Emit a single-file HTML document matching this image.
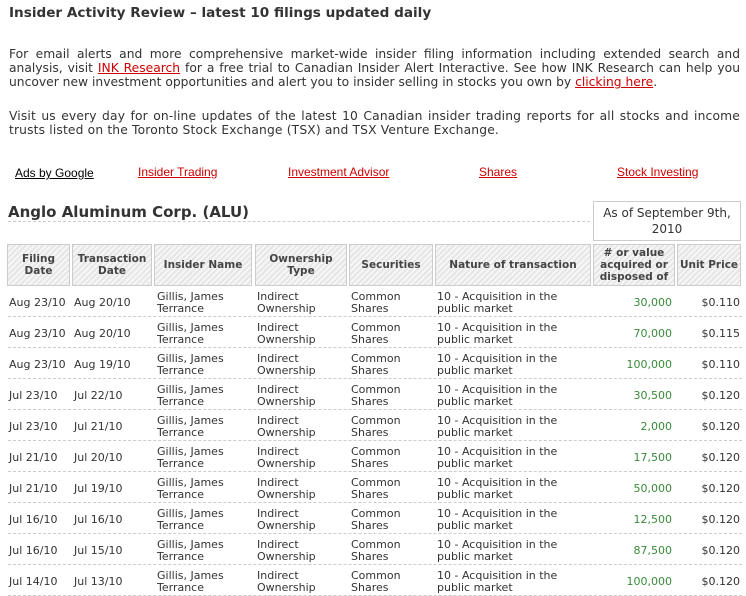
<!DOCTYPE html>
<html><head><meta charset="utf-8"><style>
*{margin:0;padding:0;box-sizing:border-box}
body{width:746px;height:596px;overflow:hidden;background:#fff;font-family:"DejaVu Sans","Liberation Sans",sans-serif;color:#333;position:relative}
h1{position:absolute;left:9px;top:5px;font-size:13.6px;font-weight:bold;color:#333}
.p{position:absolute;left:9px;font-size:12.3px;line-height:14px;color:#333;width:731px;text-align:justify}
.p a{color:#c00;text-decoration:underline}
.ad{position:absolute;top:165px;font-family:"Liberation Sans",sans-serif;font-size:12px;color:#c00;text-decoration:underline}
h2{position:absolute;left:8px;top:203px;font-size:15px;font-weight:bold;color:#333;width:582px;border-bottom:1px dashed #ccc;height:19px;line-height:19px}
.asof{position:absolute;left:593px;top:201px;width:148px;height:40px;border:1px solid #ccc;font-size:12px;text-align:center;line-height:16px;padding-top:3px;color:#333}
.h{position:absolute;top:244px;height:42px;border:1px solid #ccc;background:repeating-linear-gradient(135deg,#e6e6e6 0 2px,#f6f6f6 2px 4px);font-size:10.5px;font-weight:bold;color:#444;display:flex;align-items:center;justify-content:center;text-align:center;line-height:12px}
.r{position:absolute;left:8px;width:734px;height:31px;border-bottom:1px dashed #ccc;font-size:11px;color:#333;line-height:12px}
.r span{position:absolute;white-space:nowrap}
.g{color:#3a8a3a}
</style></head><body>
<h1>Insider Activity Review – latest 10 filings updated daily</h1>
<div class="p" style="top:47px">For email alerts and more comprehensive market-wide insider filing information including extended search and analysis, visit <a>INK Research</a> for a free trial to Canadian Insider Alert Interactive. See how INK Research can help you uncover new investment opportunities and alert you to insider selling in stocks you own by <a>clicking here</a>.</div>
<div class="p" style="top:109px;letter-spacing:0.15px">Visit us every day for on-line updates of the latest 10 Canadian insider trading reports for all stocks and income trusts listed on the Toronto Stock Exchange (TSX) and TSX Venture Exchange.</div>
<div class="ad" style="left:15px;color:#000;top:166px">Ads by Google</div>
<div class="ad" style="left:138px">Insider Trading</div>
<div class="ad" style="left:288px">Investment Advisor</div>
<div class="ad" style="left:479px">Shares</div>
<div class="ad" style="left:617px">Stock Investing</div>
<h2>Anglo Aluminum Corp. (ALU)</h2>
<div class="asof">As of September 9th,<br>2010</div>
<div class="h" style="left:7px;width:63px">Filing<br>Date</div>
<div class="h" style="left:72px;width:80px">Transaction<br>Date</div>
<div class="h" style="left:154px;width:98px">Insider Name</div>
<div class="h" style="left:255px;width:92px">Ownership<br>Type</div>
<div class="h" style="left:349px;width:84px">Securities</div>
<div class="h" style="left:435px;width:156px">Nature of transaction</div>
<div class="h" style="left:593px;width:82px">&#35; or value<br>acquired or<br>disposed of</div>
<div class="h" style="left:677px;width:64px">Unit Price</div>
<div class="r" style="top:286px"><span style="left:1px;top:11px">Aug 23/10</span><span style="left:66px;top:11px">Aug 20/10</span><span style="left:149px;top:5px">Gillis, James<br>Terrance</span><span style="left:249px;top:5px">Indirect<br>Ownership</span><span style="left:343px;top:5px">Common<br>Shares</span><span style="left:429px;top:5px">10 - Acquisition in the<br>public market</span><span class="g" style="right:70px;top:11px">30,000</span><span style="right:2px;top:11px">$0.110</span></div>
<div class="r" style="top:317px"><span style="left:1px;top:11px">Aug 23/10</span><span style="left:66px;top:11px">Aug 20/10</span><span style="left:149px;top:5px">Gillis, James<br>Terrance</span><span style="left:249px;top:5px">Indirect<br>Ownership</span><span style="left:343px;top:5px">Common<br>Shares</span><span style="left:429px;top:5px">10 - Acquisition in the<br>public market</span><span class="g" style="right:70px;top:11px">70,000</span><span style="right:2px;top:11px">$0.115</span></div>
<div class="r" style="top:348px"><span style="left:1px;top:11px">Aug 23/10</span><span style="left:66px;top:11px">Aug 19/10</span><span style="left:149px;top:5px">Gillis, James<br>Terrance</span><span style="left:249px;top:5px">Indirect<br>Ownership</span><span style="left:343px;top:5px">Common<br>Shares</span><span style="left:429px;top:5px">10 - Acquisition in the<br>public market</span><span class="g" style="right:70px;top:11px">100,000</span><span style="right:2px;top:11px">$0.110</span></div>
<div class="r" style="top:379px"><span style="left:1px;top:11px">Jul 23/10</span><span style="left:66px;top:11px">Jul 22/10</span><span style="left:149px;top:5px">Gillis, James<br>Terrance</span><span style="left:249px;top:5px">Indirect<br>Ownership</span><span style="left:343px;top:5px">Common<br>Shares</span><span style="left:429px;top:5px">10 - Acquisition in the<br>public market</span><span class="g" style="right:70px;top:11px">30,500</span><span style="right:2px;top:11px">$0.120</span></div>
<div class="r" style="top:410px"><span style="left:1px;top:11px">Jul 23/10</span><span style="left:66px;top:11px">Jul 21/10</span><span style="left:149px;top:5px">Gillis, James<br>Terrance</span><span style="left:249px;top:5px">Indirect<br>Ownership</span><span style="left:343px;top:5px">Common<br>Shares</span><span style="left:429px;top:5px">10 - Acquisition in the<br>public market</span><span class="g" style="right:70px;top:11px">2,000</span><span style="right:2px;top:11px">$0.120</span></div>
<div class="r" style="top:441px"><span style="left:1px;top:11px">Jul 21/10</span><span style="left:66px;top:11px">Jul 20/10</span><span style="left:149px;top:5px">Gillis, James<br>Terrance</span><span style="left:249px;top:5px">Indirect<br>Ownership</span><span style="left:343px;top:5px">Common<br>Shares</span><span style="left:429px;top:5px">10 - Acquisition in the<br>public market</span><span class="g" style="right:70px;top:11px">17,500</span><span style="right:2px;top:11px">$0.120</span></div>
<div class="r" style="top:472px"><span style="left:1px;top:11px">Jul 21/10</span><span style="left:66px;top:11px">Jul 19/10</span><span style="left:149px;top:5px">Gillis, James<br>Terrance</span><span style="left:249px;top:5px">Indirect<br>Ownership</span><span style="left:343px;top:5px">Common<br>Shares</span><span style="left:429px;top:5px">10 - Acquisition in the<br>public market</span><span class="g" style="right:70px;top:11px">50,000</span><span style="right:2px;top:11px">$0.120</span></div>
<div class="r" style="top:503px"><span style="left:1px;top:11px">Jul 16/10</span><span style="left:66px;top:11px">Jul 16/10</span><span style="left:149px;top:5px">Gillis, James<br>Terrance</span><span style="left:249px;top:5px">Indirect<br>Ownership</span><span style="left:343px;top:5px">Common<br>Shares</span><span style="left:429px;top:5px">10 - Acquisition in the<br>public market</span><span class="g" style="right:70px;top:11px">12,500</span><span style="right:2px;top:11px">$0.120</span></div>
<div class="r" style="top:534px"><span style="left:1px;top:11px">Jul 16/10</span><span style="left:66px;top:11px">Jul 15/10</span><span style="left:149px;top:5px">Gillis, James<br>Terrance</span><span style="left:249px;top:5px">Indirect<br>Ownership</span><span style="left:343px;top:5px">Common<br>Shares</span><span style="left:429px;top:5px">10 - Acquisition in the<br>public market</span><span class="g" style="right:70px;top:11px">87,500</span><span style="right:2px;top:11px">$0.120</span></div>
<div class="r" style="top:565px"><span style="left:1px;top:11px">Jul 14/10</span><span style="left:66px;top:11px">Jul 13/10</span><span style="left:149px;top:5px">Gillis, James<br>Terrance</span><span style="left:249px;top:5px">Indirect<br>Ownership</span><span style="left:343px;top:5px">Common<br>Shares</span><span style="left:429px;top:5px">10 - Acquisition in the<br>public market</span><span class="g" style="right:70px;top:11px">100,000</span><span style="right:2px;top:11px">$0.120</span></div>
</body></html>
